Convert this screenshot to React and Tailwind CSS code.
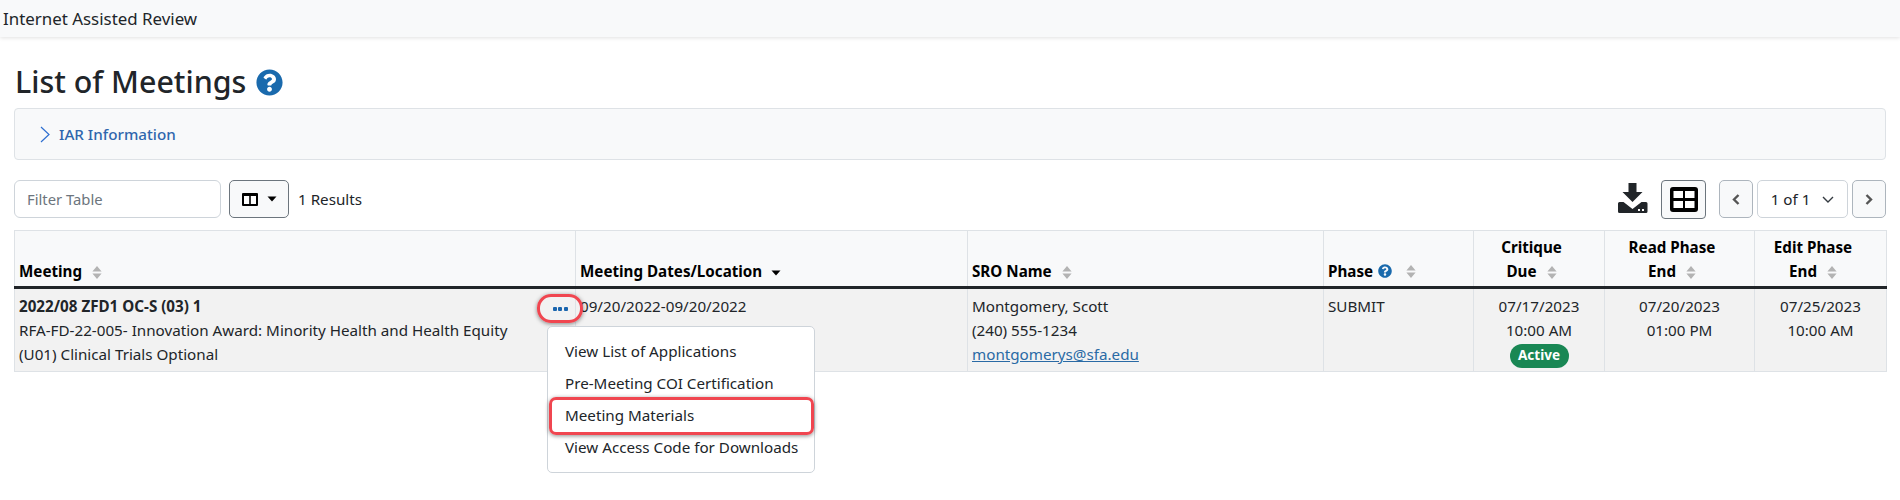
import React from "react";
import { FaQuestionCircle } from "react-icons/fa";

function Sort({ className = "" }) {
  return (
    <svg width="10" height="13" viewBox="0 0 10 13" className={"inline-block " + className}>
      <path d="M5 0 L9.6 5.4 L0.4 5.4 Z M5 13 L9.6 7.6 L0.4 7.6 Z" fill="#b3b3b3" />
    </svg>
  );
}

function Th({ children, center }) {
  return (
    <th className={"border-l border-[#dee2e6] first:border-l-0 border-b-[3px] border-b-[#212529] align-bottom pl-[4px] pb-[3px] pt-[4px] font-bold text-black leading-[24px] " + (center ? "text-center pr-[19px]" : "text-left pr-[4px]")}>
      {children}
    </th>
  );
}

function Td({ children, center, className = "" }) {
  return (
    <td className={"border-l border-[#dee2e6] first:border-l-0 align-top pt-[5px] pb-[5px] leading-[24px] text-[#212529] " + (center ? "text-center " : "text-left ") + className}>
      {children}
    </td>
  );
}

export default function App() {
  return (
    <div className="w-[1900px] h-[500px] overflow-hidden bg-white text-[#212529] font-['Noto_Sans',sans-serif] text-[15.2px]">
      <div className="h-[37px] bg-[#f8f9fa] shadow-[0_1px_4px_rgba(0,0,0,0.12)] flex items-center pl-[3px] text-[16.9px] text-[#212529]">
        Internet Assisted Review
      </div>
      <div className="pl-[14px] pr-[14px]">
        <div className="h-[71px] flex items-center gap-[10px] pt-[19px] pl-px">
          <h1 className="text-[30.4px] leading-[40px] font-medium">List of Meetings</h1>
          <FaQuestionCircle className="text-[#1a6aad] w-[27px] h-[27px]" />
        </div>
        <div className="h-[52px] border border-[#dee2e6] rounded-[4px] bg-[#f8f9fa] flex items-center pl-[25px] gap-[9px]">
          <svg width="10" height="17" viewBox="0 0 10 17" fill="none" stroke="#2f6fd0" strokeWidth="1.2"><path d="M1 1 L9 8.5 L1 16" /></svg>
          <span className="text-[#2f66ad] font-medium text-[15.2px]">IAR Information</span>
        </div>
        <div className="h-[38px] mt-[20px] flex items-center">
          <input readOnly placeholder="Filter Table" className="w-[207px] h-[38px] border border-[#ced4da] rounded-[6px] px-[12px] text-[14.8px] placeholder:text-[#6c757d] bg-white outline-none" />
          <button className="ml-[8px] w-[60px] h-[38px] border border-[#6c757d] rounded-[5px] bg-[#f8f9fa] flex items-center justify-center gap-[9px]">
            <svg width="16" height="13" viewBox="0 0 16 13"><rect width="16" height="13" rx="1" fill="#000" /><rect x="2" y="3" width="5.2" height="8" fill="#fff" /><rect x="8.8" y="3" width="5.2" height="8" fill="#fff" /></svg>
            <svg width="10" height="6" viewBox="0 0 10 6"><path d="M0.5 0.5 H9.5 L5 5.5 Z" fill="#000" /></svg>
          </button>
          <span className="ml-[9px] text-[#212529]">1 Results</span>
          <div className="ml-auto flex items-center">
            <svg width="30" height="30" viewBox="0 0 30 30" className="-mt-[2px]">
              <path d="M10.5 0 H18.5 V9 H24.5 L14.5 19 L4.5 9 H10.5 Z" fill="#212529" />
              <path d="M1.5 19 H5.5 L14.5 26 L23.5 19 H28 Q29.5 19 29.5 20.5 V28.5 Q29.5 30 28 30 H1.5 Q0 30 0 28.5 V20.5 Q0 19 1.5 19 Z" fill="#212529" />
              <rect x="20" y="26" width="2" height="2" fill="#fff" /><rect x="24" y="26" width="2" height="2" fill="#fff" />
            </svg>
            <button className="ml-[13px] w-[45px] h-[39px] border border-[#6c757d] rounded-[4px] bg-[#f8f9fa] flex items-center justify-center">
              <svg width="28" height="25" viewBox="0 0 28 25"><rect width="28" height="25" rx="3" fill="#000" /><rect x="3.5" y="4" width="9.5" height="7" fill="#fff" /><rect x="15" y="4" width="9.5" height="7" fill="#fff" /><rect x="3.5" y="14" width="9.5" height="7" fill="#fff" /><rect x="15" y="14" width="9.5" height="7" fill="#fff" /></svg>
            </button>
            <button className="ml-[13px] w-[34px] h-[38px] border border-[#adb5bd] rounded-[5px] bg-[#f8f9fa] flex items-center justify-center">
              <svg width="8" height="11" viewBox="0 0 8 11" fill="none" stroke="#555" strokeWidth="2.4"><path d="M6.5 1 L2 5.5 L6.5 10" /></svg>
            </button>
            <div className="ml-[4px] w-[91px] h-[38px] border border-[#ced4da] rounded-[5px] bg-white flex items-center justify-center gap-[12px] text-[#212529]">
              <span>1 of 1</span>
              <svg width="12" height="7" viewBox="0 0 12 7" fill="none" stroke="#343a40" strokeWidth="1.4"><path d="M1 1 L6 6 L11 1" /></svg>
            </div>
            <button className="ml-[4px] w-[34px] h-[38px] border border-[#adb5bd] rounded-[5px] bg-[#f8f9fa] flex items-center justify-center">
              <svg width="8" height="11" viewBox="0 0 8 11" fill="none" stroke="#555" strokeWidth="2.4"><path d="M1.5 1 L6 5.5 L1.5 10" /></svg>
            </button>
          </div>
        </div>
        <div className="relative mt-[12px] w-[1872px]">
          <table className="w-[1872px] table-fixed border-collapse border border-[#dee2e6]">
            <colgroup>
              <col className="w-[561px]" />
              <col className="w-[392px]" />
              <col className="w-[356px]" />
              <col className="w-[150px]" />
              <col className="w-[131px]" />
              <col className="w-[150px]" />
              <col className="w-[132px]" />
            </colgroup>
            <thead className="bg-[#f8f9fa]">
              <tr>
                <Th><span>Meeting</span><Sort className="ml-[10px]" /></Th>
                <Th>Meeting Dates/Location
                  <svg width="10" height="6" viewBox="0 0 10 6" className="inline-block ml-[9px]"><path d="M0.5 0.5 H9.5 L5 5.5 Z" fill="#000" /></svg>
                </Th>
                <Th>SRO Name<Sort className="ml-[10px]" /></Th>
                <Th><span className="inline-flex items-center">Phase<FaQuestionCircle className="text-[#1a6aad] w-[14px] h-[14px] ml-[5px]" /><Sort className="ml-[14px]" /></span></Th>
                <Th center>Critique<br />Due<Sort className="ml-[10px]" /></Th>
                <Th center>Read Phase<br />End<Sort className="ml-[10px]" /></Th>
                <Th center>Edit Phase<br />End<Sort className="ml-[10px]" /></Th>
              </tr>
            </thead>
            <tbody className="bg-[#f2f2f2]">
              <tr>
                <Td className="px-[4px]">
                  <div className="font-bold">2022/08 ZFD1 OC-S (03) 1</div>
                  <div className="pr-[50px]">RFA-FD-22-005- Innovation Award: Minority Health and Health Equity (U01) Clinical Trials Optional</div>
                </Td>
                <Td className="px-[4px]">09/20/2022-09/20/2022</Td>
                <Td className="px-[4px]">
                  <div>Montgomery, Scott</div>
                  <div>(240) 555-1234</div>
                  <a href="#" className="underline text-[#2a6aa5]">montgomerys@sfa.edu</a>
                </Td>
                <Td className="px-[4px]">SUBMIT</Td>
                <Td center className="px-[4px]">
                  <div>07/17/2023</div>
                  <div>10:00 AM</div>
                  <div className="mx-auto mt-[2px] -mb-[2px] w-[59px] h-[24px] rounded-full bg-[#198754] text-white font-bold text-[13.5px] leading-[23px] text-center">Active</div>
                </Td>
                <Td center className="px-[4px]"><div>07/20/2023</div><div>01:00 PM</div></Td>
                <Td center className="px-[4px]"><div>07/25/2023</div><div>10:00 AM</div></Td>
              </tr>
            </tbody>
          </table>
          <div className="absolute left-[523px] top-[64px] w-[46px] h-[29px] rounded-[14px] border-[3px] border-[#f04650] shadow-[0_1px_4px_rgba(0,0,0,0.45)] flex items-center justify-center gap-[1.5px]">
            <span className="w-[4px] h-[4px] bg-[#1a65ae] rounded-[1px]" />
            <span className="w-[4px] h-[4px] bg-[#1a65ae] rounded-[1px]" />
            <span className="w-[4px] h-[4px] bg-[#1a65ae] rounded-[1px]" />
          </div>
          <div className="absolute left-[533px] top-[96px] w-[268px] h-[147px] bg-white border border-[#ced4da] rounded-[5px] py-[8px] flex flex-col">
            <div className="h-[32px] pl-[17px] leading-[32px]">View List of Applications</div>
            <div className="h-[32px] pl-[17px] leading-[32px]">Pre-Meeting COI Certification</div>
            <div className="h-[32px] pl-[17px] leading-[32px]">Meeting Materials</div>
            <div className="h-[32px] pl-[17px] leading-[32px]">View Access Code for Downloads</div>
          </div>
          <div className="absolute left-[535px] top-[167px] w-[265px] h-[38px] rounded-[7px] border-[3px] border-[#f04650] shadow-[0_1px_4px_rgba(0,0,0,0.45)]" />
        </div>
      </div>
    </div>
  );
}
